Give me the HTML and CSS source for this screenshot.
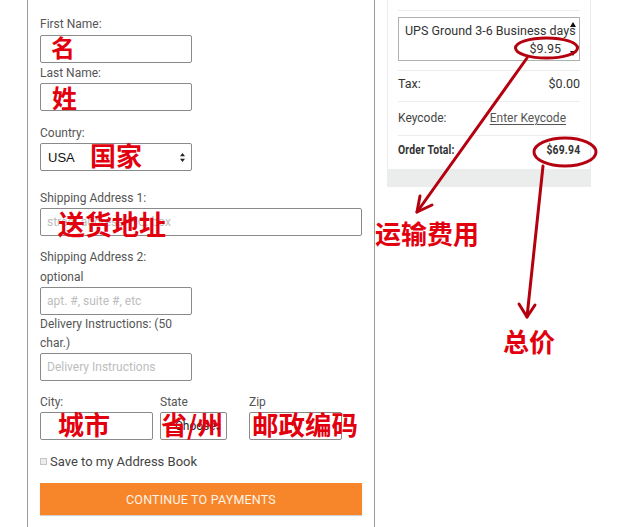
FILE: index.html
```html
<!DOCTYPE html>
<html lang="en">
<head>
<meta charset="utf-8">
<title>Shipping</title>
<link rel="stylesheet" href="styles.css">
</head>
<body>
<div class="page">
  <div class="form-panel">
    <div class="field field-first">
      <div class="label">First Name:</div>
      <input class="input input-short" type="text">
    </div>
    <div class="field">
      <div class="label">Last Name:</div>
      <input class="input input-short" type="text">
    </div>
    <div class="field field-country">
      <div class="label">Country:</div>
      <div class="select input-short"><span>USA</span>
        <svg class="arrows" width="5" height="9" viewBox="0 0 5 9"><path d="M2.5 0L5 3.2H0Z M2.5 9L5 5.8H0Z" fill="#222"/></svg>
      </div>
    </div>
    <div class="field field-ship1">
      <div class="label">Shipping Address 1:</div>
      <input class="input input-wide" type="text" placeholder="street address, P.O. box">
    </div>
    <div class="field field-ship2">
      <div class="label">Shipping Address 2:<br>optional</div>
      <input class="input input-short" type="text" placeholder="apt. #, suite #, etc">
    </div>
    <div class="field field-delivery">
      <div class="label label-tight">Delivery Instructions: (50<br>char.)</div>
      <input class="input input-short" type="text" placeholder="Delivery Instructions">
    </div>
    <div class="field-row">
      <div class="col col-city">
        <div class="label label-tight">City:</div>
        <input class="input" type="text">
      </div>
      <div class="col col-state">
        <div class="label label-tight">State</div>
        <div class="select select-state"><span>Choose</span>
          <svg class="arrows" width="5" height="9" viewBox="0 0 5 9"><path d="M2.5 0L5 3.2H0Z M2.5 9L5 5.8H0Z" fill="#222"/></svg>
        </div>
      </div>
      <div class="col col-zip">
        <div class="label label-tight">Zip</div>
        <input class="input" type="text">
      </div>
    </div>
    <label class="save-row"><span class="checkbox"></span>Save to my Address Book</label>
    <button class="continue-btn" type="button">CONTINUE TO PAYMENTS</button>
  </div>

  <div class="summary-panel">
    <div class="summary-top"></div>
    <div class="ship-select">
      <div class="ship-line">UPS Ground 3-6 Business days</div>
      <div class="ship-price">$9.95</div>
      <svg class="ship-up" width="6" height="5" viewBox="0 0 6 5"><path d="M3 0L6 5H0Z" fill="#111"/></svg>
      <svg class="ship-down" width="6" height="5" viewBox="0 0 6 5"><path d="M3 5L6 0H0Z" fill="#111"/></svg>
    </div>
    <div class="summary-row row-tax"><span>Tax:</span><span>$0.00</span></div>
    <div class="summary-row row-key"><span>Keycode:</span><a class="key-link" href="#">Enter Keycode</a></div>
    <div class="summary-row row-total"><span class="narrow narrow-left">Order Total:</span><span class="narrow narrow-right">$69.94</span></div>
    <div class="summary-foot"></div>
  </div>
</div>

<div class="annotations">
  <svg class="marks" width="622" height="527" viewBox="0 0 622 527">
    <g fill="none" stroke="#b5000f" stroke-width="3" stroke-linecap="round" stroke-linejoin="round">
      <ellipse cx="546.5" cy="48" rx="31" ry="10"/>
      <ellipse cx="565" cy="152" rx="31" ry="14"/>
      <path d="M527 58 L417 212"/>
      <path d="M420 196 L417 212 L432 205"/>
      <path d="M543 166 L527 317"/>
      <path d="M519 304 L527 317 L535 305"/>
    </g>
  </svg>
  <span class="note note-first">名</span>
  <span class="note note-last">姓</span>
  <span class="note note-country">国家</span>
  <span class="note note-ship">送货地址</span>
  <span class="note note-city">城市</span>
  <span class="note note-state">省/州</span>
  <span class="note note-zip">邮政编码</span>
  <span class="note note-fee">运输费用</span>
  <span class="note note-total">总价</span>
</div>
</body>
</html>
```

FILE: styles.css
```css
* { box-sizing: border-box; }

html, body {
  margin: 0;
  padding: 0;
  background: #ffffff;
}

body {
  width: 622px;
  height: 527px;
  overflow: hidden;
  position: relative;
  font-family: Roboto, "Liberation Sans", Arial, sans-serif;
}

.page {
  display: flex;
  align-items: flex-start;
}

/* ---------- left form ---------- */
.form-panel {
  margin-left: 27px;
  width: 348px;
  min-height: 527px;
  border-left: 1px solid #9a9a9a;
  border-right: 1px solid #9a9a9a;
  padding: 14px 12px 0 12px;
}

.field-first { margin-bottom: 0; }
.field-first .label { margin-bottom: 1px; }

.label {
  font-size: 12px;
  line-height: 20px;
  color: #555;
}

.label-tight { line-height: 19px; }

.input, .select {
  display: block;
  height: 28px;
  border: 1px solid #8a8a8a;
  border-radius: 2px;
  background: #fff;
  padding: 0 6px;
  font-family: Roboto, "Liberation Sans", Arial, sans-serif;
  font-size: 12px;
  color: #222;
  outline: none;
  margin: 0;
}

.input::placeholder { color: #bdbdbd; }

.input-short { width: 152px; }
.input-wide { width: 322px; }

.field-country { margin-top: 12px; }
.field-ship1 { margin-top: 17px; }
.field-ship2 { margin-top: 11px; }
.field-delivery { margin-top: 0; }

.select {
  display: flex;
  align-items: center;
  justify-content: space-between;
  font-family: "Liberation Sans", Arial, sans-serif;
  font-size: 13px;
  color: #111;
  padding: 0 6px 0 7px;
}

.select .arrows { flex: none; }

.field-row {
  display: flex;
  margin-top: 12px;
}

.col-city { width: 113px; }
.col-state { width: 67px; margin-left: 7px; }
.col-zip { width: 93px; margin-left: 22px; }

.col .input, .col .select { width: 100%; }

.select-state {
  font-family: Roboto, "Liberation Sans", Arial, sans-serif;
  font-size: 12px;
  padding: 0 8px 0 14px;
  color: #222;
}

.save-row {
  display: flex;
  align-items: center;
  margin-top: 11px;
  height: 20px;
  font-size: 13px;
  color: #444;
}

.checkbox {
  width: 7px;
  height: 7px;
  border: 1px solid #c4c4c4;
  background: #ececec;
  margin-right: 3px;
  margin-top: 1px;
}

.continue-btn {
  display: block;
  width: 322px;
  height: 32px;
  margin-top: 12px;
  border: none;
  border-radius: 0;
  background: #f7862b;
  box-shadow: 0 1px 1px rgba(0,0,0,0.18);
  color: #fff3e6;
  font-family: Roboto, "Liberation Sans", Arial, sans-serif;
  font-size: 12.5px;
  letter-spacing: 0.2px;
  padding: 0;
}

/* ---------- right summary ---------- */
.summary-panel {
  margin-left: 12px;
  width: 204px;
  border-left: 1px solid #ececec;
  border-right: 1px solid #ececec;
  padding: 0 10px;
  position: relative;
  font-size: 12.5px;
  color: #333;
}

.summary-top {
  height: 11px;
  border-bottom: 1px solid #ececec;
}

.ship-select {
  position: relative;
  margin-top: 6px;
  height: 44px;
  border: 1px solid #b0b0b0;
  padding: 4px 0 0 6px;
  line-height: 18px;
  color: #333;
}

.ship-line { white-space: nowrap; }

.ship-price {
  text-align: right;
  padding-right: 18px;
}

.ship-up { position: absolute; right: 3px; top: 4px; }
.ship-down { position: absolute; right: 3px; top: 33px; }

.summary-row {
  display: flex;
  justify-content: space-between;
  line-height: 22px;
  border-bottom: 1px solid #ececec;
}

.ship-select + .summary-row { margin-top: 9px; border-top: 1px solid #ececec; }

.row-tax { padding: 2px 0 6px; }
.row-key { padding: 5px 0 6px; font-size: 12px; }
.row-key span { color: #444; }
.row-total {
  padding: 3px 0 8px;
  border-bottom: none;
  font-weight: bold;
  font-size: 13px;
  color: #333;
}

.narrow {
  display: inline-block;
  transform: scaleX(0.8);
  letter-spacing: 0.2px;
}
.narrow-left { transform-origin: left center; }
.narrow-right { transform-origin: right center; }

.key-link {
  color: #555;
  text-decoration: underline;
  text-underline-offset: 2px;
  margin-right: 14px;
}

.summary-foot {
  height: 18px;
  margin: 0 -10px;
  background: #ebecec;
}

/* ---------- annotations ---------- */
.annotations {
  position: absolute;
  left: 0;
  top: 0;
  width: 622px;
  height: 527px;
  pointer-events: none;
}

.marks { position: absolute; left: 0; top: 0; }

.note {
  position: absolute;
  font-family: "Noto Sans CJK SC", sans-serif;
  font-weight: bold;
  font-size: 26px;
  line-height: 26px;
  color: #e2000f;
  white-space: nowrap;
}

.note-first { left: 51px; top: 35px; font-size: 24px; line-height: 24px; }
.note-last { left: 52px; top: 85px; font-size: 25px; line-height: 25px; }
.note-country { left: 90px; top: 142px; }
.note-ship { left: 58px; top: 210px; font-size: 27px; line-height: 27px; }
.note-city { left: 58px; top: 411px; }
.note-state { left: 161px; top: 411px; }
.note-zip { left: 252px; top: 411px; font-size: 26.5px; }
.note-fee { left: 375px; top: 220px; }
.note-total { left: 503px; top: 328px; }
```
